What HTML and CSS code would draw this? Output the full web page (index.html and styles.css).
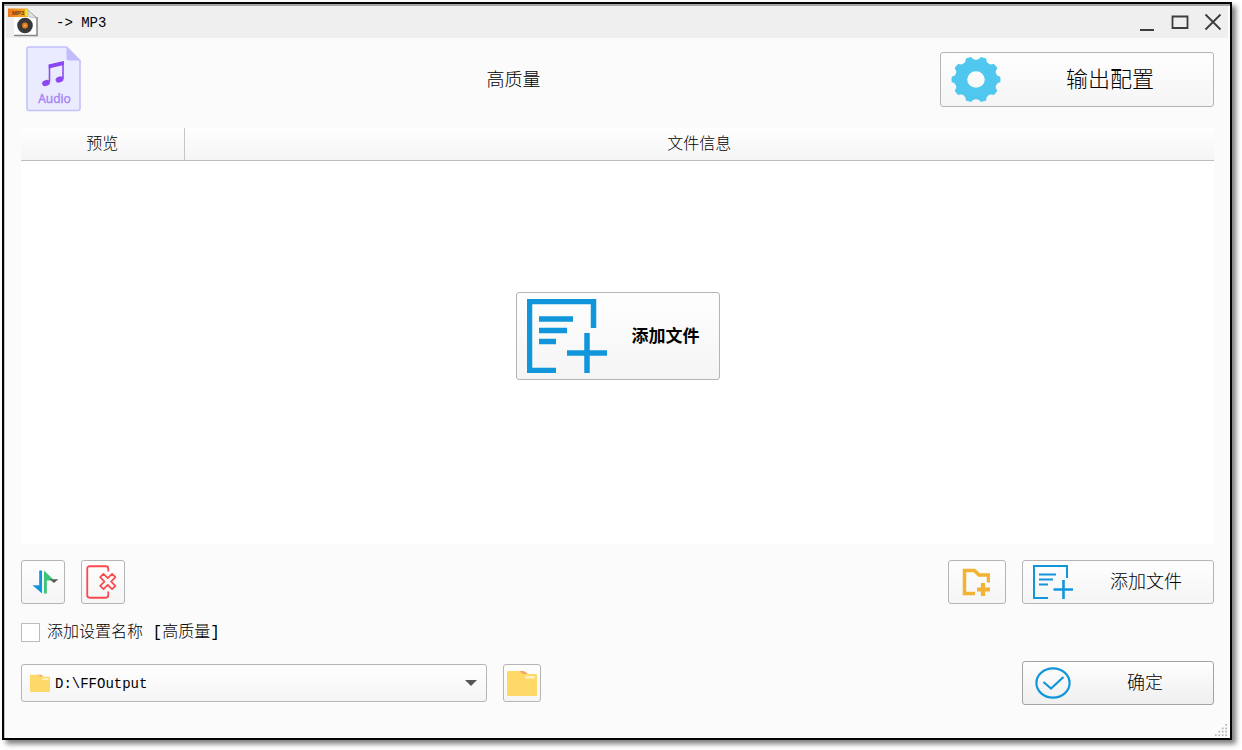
FILE: index.html
```html
<!DOCTYPE html>
<html lang="zh-CN">
<head>
<meta charset="utf-8">
<title>MP3</title>
<link rel="stylesheet" href="styles.css">
</head>
<body>
<div class="window">
  <header class="titlebar">
    <svg class="app-icon" viewBox="0 0 30 30" aria-hidden="true">
      <path d="M6 4h17l6 6v18H6z" fill="#fff"/>
      <path d="M29 10v18.500H6" fill="none" stroke="#858585" stroke-width="1.500"/>
      <path d="M20 3l9 8" fill="none" stroke="#999"/>
      <path d="M20 3l1 7 7 1z" fill="#e3e3e3" stroke="#aaa" stroke-width=".6"/>
      <circle cx="17" cy="18.500" r="7.800" fill="#383838"/>
      <circle cx="17" cy="18.500" r="2.900" fill="#e87d1c"/>
      <circle cx="17" cy="18.500" r=".7" fill="#ffd9a8"/>
      <path d="M0 1.500h20v8.500H0z" fill="url(#tag)"/>
      <path d="M18.500 2.500v6.500" stroke="#f5ee30" stroke-width="2"/>
      <defs><linearGradient id="tag"><stop stop-color="#ee761d"/><stop offset="1" stop-color="#f3b323"/></linearGradient></defs>
      <text x="4" y="8" class="tag-text">MP3</text>
    </svg>
    <h1 class="title">-&gt; MP3</h1>
    <div class="window-controls">
      <button class="control" aria-label="最小化"><svg viewBox="0 0 18 18"><path d="M2 17h14" stroke-width="2"/></svg></button>
      <button class="control" aria-label="最大化"><svg viewBox="0 0 18 18"><path d="M1.500 3.500h15v11.500h-15z" stroke-width="1.800"/></svg></button>
      <button class="control" aria-label="关闭"><svg viewBox="0 0 18 18"><path d="M1.500 1.500l15 15M16.500 1.500l-15 15" stroke-width="1.800"/></svg></button>
    </div>
  </header>

  <main class="content">
    <section class="profile">
      <svg class="audio-icon" viewBox="0 0 55 66" aria-hidden="true">
        <path d="M2.500 1h38L54 14.500v48a2 2 0 0 1-2 2H3a2 2 0 0 1-2-2V2.500A1.500 1.500 0 0 1 2.500 1z" fill="#ebebff" stroke="#c3c1fb" stroke-width="1.600"/>
        <path d="M40.500 1L54 14.500H42.500a2 2 0 0 1-2-2z" fill="#c0bdfc"/>
        <path d="M23.500 36V19.500L37 16.500V33" fill="none" stroke="#8f4df2" stroke-width="1.600"/>
        <path d="M22.700 18.600L37.800 15v4l-15.100 3.600z" fill="#8847f0"/>
        <ellipse cx="20" cy="37" rx="4" ry="3" fill="#8c49f2" transform="rotate(-18 20 37)"/>
        <ellipse cx="33.500" cy="33.500" rx="4" ry="3" fill="#8c49f2" transform="rotate(-18 33.500 33.500)"/>
        <text x="28.500" y="56.500" class="audio-text">Audio</text>
      </svg>
      <p class="profile-name">高质量</p>
      <button class="btn config-btn">
        <svg class="gear-icon" viewBox="0 0 50 50" preserveAspectRatio="none" aria-hidden="true">
          <mask id="teeth">
            <rect width="50" height="50" fill="#fff"/>
            <circle cx="25" cy="25" r="8.800"/>
            <circle cx="49.700" cy="33" r="5"/><circle cx="40.300" cy="46" r="5"/><circle cx="25" cy="51" r="5"/><circle cx="9.700" cy="46" r="5"/><circle cx=".3" cy="33" r="5"/>
            <circle cx="49.700" cy="17" r="5"/><circle cx="40.300" cy="4" r="5"/><circle cx="25" cy="-1" r="5"/><circle cx="9.700" cy="4" r="5"/><circle cx=".3" cy="17" r="5"/>
          </mask>
          <circle cx="25" cy="25" r="24.500" fill="#50c7ee" mask="url(#teeth)"/>
        </svg>
        <span class="btn-label">输出配置</span>
      </button>
    </section>

    <section class="files">
      <table class="file-table">
        <thead><tr><th class="col-preview">预览</th><th>文件信息</th></tr></thead>
        <tbody></tbody>
      </table>
      <button class="btn add-large">
        <svg class="add-large-icon" viewBox="0 0 80 74" aria-hidden="true"><use href="#add-bold"/></svg>
        <span class="btn-label">添加文件</span>
      </button>
    </section>

    <section class="toolbar">
      <button class="btn square" aria-label="排序">
        <svg viewBox="0 0 44 44" aria-hidden="true">
          <path d="M18 10h3v24L11 25.500h7z" fill="#1296db"/>
          <path d="M23 10l9 8.500v2h-6V34h-3z" fill="#3cc478"/>
          <path d="M29 19h9l-4.500 4z" fill="#595959"/>
        </svg>
      </button>
      <button class="btn square" aria-label="清空列表">
        <svg viewBox="0 0 44 44" fill="none" stroke="#fb4a4d" aria-hidden="true">
          <path d="M27.500 11V8a2.500 2.500 0 0 0-2.500-2.500H8A2.500 2.500 0 0 0 5.500 8v28A2.500 2.500 0 0 0 8 38.500h17a2.500 2.500 0 0 0 2.500-2.500v-4" stroke-width="1.900"/>
          <path d="M22.500 13.500l4.500 4.500L31.500 13.500l3.500 3.500-4.500 4.500 4.500 4.500-3.500 3.500-4.500-4.500-4.500 4.500-3.500-3.500 4.500-4.500-4.500-4.500z" stroke-width="1.800" stroke-linejoin="round"/>
        </svg>
      </button>
      <div class="spacer"></div>
      <button class="btn folder-btn" aria-label="添加文件夹">
        <svg class="add-folder-icon" viewBox="0 0 28 28" fill="none" stroke="#f2b233" stroke-width="3.500" aria-hidden="true">
          <path d="M13 25.500H2.500v-23h10L17 7h9.500v7.500"/>
          <path d="M21 15v13M15 21.500h13" stroke-width="4.200"/>
        </svg>
      </button>
      <button class="btn action-btn">
        <svg class="add-icon" viewBox="0 0 40 34" fill="none" stroke="#1296db" stroke-width="2" aria-hidden="true">
          <path d="M15 33H1V1h33v12M6 9.500h17M6 14.500h14M6 19.500h9"/>
          <path d="M20.500 24.500H40M30.500 15v19" stroke-width="2.600"/>
        </svg>
        <span class="btn-label">添加文件</span>
      </button>
    </section>

    <section class="options">
      <input class="check" type="checkbox" id="append-name">
      <label for="append-name">添加设置名称 [高质量]</label>
    </section>

    <section class="output">
      <div class="path">
        <svg class="path-folder" viewBox="0 0 30 26" preserveAspectRatio="none" aria-hidden="true"><use href="#folder"/></svg>
        <select class="path-select" aria-label="输出文件夹"><option>D:\FFOutput</option></select>
        <svg class="path-arrow" viewBox="0 0 12 6" aria-hidden="true"><path d="M0 0h12L6 6z" fill="#555"/></svg>
      </div>
      <button class="btn open-btn" aria-label="打开文件夹">
        <svg class="open-folder" viewBox="0 0 30 26" preserveAspectRatio="none" aria-hidden="true"><use href="#folder"/></svg>
      </button>
      <div class="spacer"></div>
      <button class="btn action-btn confirm-btn">
        <svg class="ok-icon" viewBox="0 0 36 32" fill="none" stroke="#1296db" stroke-width="2.200" aria-hidden="true">
          <ellipse cx="18" cy="16" rx="16.600" ry="14.700"/>
          <path d="M8.500 15l7.500 6.500L28.500 10"/>
        </svg>
        <span class="btn-label">确定</span>
      </button>
    </section>
  </main>
  <svg class="grip" viewBox="0 0 14 14" aria-hidden="true"><path d="M12 1h2M8 5h2M12 5h2M4 9h2M8 9h2M12 9h2M0 13h2M4 13h2M8 13h2M12 13h2" stroke="#b9b9b9" stroke-width="2"/></svg>
</div>

<svg class="symbols" aria-hidden="true">
  <symbol id="add-bold" viewBox="0 0 80 74">
    <path d="M29 71.500H2.500v-69h64V29M12 20h34M12 31.500h28M12 42.500h17" fill="none" stroke="#1296db" stroke-width="5.500"/>
    <path d="M40 54h40M60 34v40" fill="none" stroke="#1296db" stroke-width="5.500"/>
  </symbol>
  <symbol id="folder" viewBox="0 0 30 26" preserveAspectRatio="none">
    <path d="M11 1h6l4 3h-8z" fill="#f2a660"/>
    <path d="M1 1h11l4 3h13a1 1 0 0 1 1 1v20a1 1 0 0 1-1 1H1a1 1 0 0 1-1-1V2a1 1 0 0 1 1-1z" fill="#ffd968"/>
    <rect x="18" y="6" width="10" height="2.500" rx="1" fill="#fff1bf"/>
  </symbol>
</svg>
</body>
</html>
```
FILE: styles.css
```css
* {
  box-sizing: border-box;
}

body {
  margin: 0;
  min-height: 100vh;
  display: flex;
  background: #fff;
  color: #000;
  font: 300 16px/20px "Liberation Mono", "Noto Sans CJK SC", monospace;
}

svg {
  display: block;
  flex: none;
}

.symbols {
  position: absolute;
  width: 0;
  height: 0;
}

.window {
  position: relative;
  flex: 1;
  display: flex;
  flex-direction: column;
  margin: 2px 10px 10px 2px;
  padding: 2px;
  border: 2px solid #050505;
  background: #fbfbfb;
  box-shadow: inset 0 2px #a5a5a5, inset 1px 0 #c4c4c4, 4px 4px 5px rgba(0, 0, 0, .5);
}

.titlebar {
  display: flex;
  align-items: center;
  height: 32px;
  background: #efefef;
}

.app-icon {
  width: 30px;
  height: 30px;
  margin-left: 2px;
}

.tag-text {
  font: 700 6px "Liberation Sans", sans-serif;
  fill: #7d3212;
}

.title {
  flex: 1;
  margin: 0 0 0 18px;
  padding-top: 2px;
  font-size: 14px;
  font-weight: 400;
}

.window-controls {
  display: flex;
  gap: 15px;
  margin-right: 6px;
}

.control {
  width: 18px;
  height: 18px;
  padding: 0;
  border: 0;
  background: none;
}

.control svg {
  width: 18px;
  height: 18px;
  fill: none;
  stroke: #3d3d3d;
}

.content {
  flex: 1;
  display: flex;
  flex-direction: column;
  padding: 0 14px 31px 15px;
}

.profile {
  display: flex;
  align-items: center;
  height: 90px;
  padding: 0 0 8px 5px;
}

.audio-icon {
  width: 55px;
  height: 66px;
}

.audio-text {
  font: 400 12px "Open Sans", sans-serif;
  text-anchor: middle;
  fill: #a583f2;
  stroke: #a583f2;
  stroke-width: .4px;
}

.profile-name {
  flex: 1;
  margin: 0 0 0 6px;
  padding-top: 4px;
  font-size: 18px;
  text-align: center;
}

.btn {
  display: flex;
  align-items: center;
  gap: 16px;
  padding: 0 10px;
  border: 1px solid #b5b5b5;
  border-radius: 3px;
  background: linear-gradient(#fefefe, #f5f5f5);
  color: #000;
  font-family: inherit;
  font-weight: 300;
}

.btn-label {
  flex: 1;
  padding-bottom: 4px;
  text-align: center;
}

.config-btn {
  width: 274px;
  height: 55px;
  font-size: 22px;
}

.gear-icon {
  width: 50px;
  height: 47px;
}

.files {
  flex: 1;
  display: grid;
  background: #fff;
}

.file-table {
  grid-area: 1 / 1;
  align-self: start;
  width: 100%;
  border-collapse: collapse;
  table-layout: fixed;
}

.file-table th {
  height: 32px;
  padding: 3px 0 0;
  border-bottom: 1px solid #bdbdbd;
  background: linear-gradient(#fefefe, #f5f5f5);
  font-weight: 300;
}

.file-table .col-preview {
  width: 163px;
  border-right: 1px solid #c6c6c6;
}

.add-large {
  grid-area: 1 / 1;
  place-self: center;
  width: 204px;
  height: 88px;
  font-size: 17px;
  font-weight: 700;
}

.add-large-icon {
  width: 80px;
  height: 74px;
}

.toolbar {
  display: flex;
  gap: 16px;
  padding-top: 16px;
}

.square {
  width: 44px;
  height: 44px;
  padding: 0;
}

.square svg {
  width: 42px;
  height: 42px;
}

.spacer {
  flex: 1;
}

.folder-btn {
  justify-content: center;
  width: 58px;
  height: 44px;
  padding: 0 12px 0 10px;
}

.add-folder-icon {
  width: 28px;
  height: 28px;
}

.action-btn {
  width: 192px;
  height: 44px;
  font-size: 18px;
}

.add-icon {
  width: 40px;
  height: 34px;
}

.options {
  display: flex;
  align-items: center;
  gap: 7px;
  height: 57px;
}

.check {
  appearance: none;
  width: 19px;
  height: 19px;
  margin: 0;
  border: 1px solid #bcbcbc;
  background: #fff;
}

.output {
  display: flex;
  align-items: center;
  gap: 16px;
}

.path {
  position: relative;
  flex: 0 1 466px;
}

.path-select {
  display: block;
  appearance: none;
  width: 100%;
  height: 38px;
  padding: 2px 33px 0;
  border: 1px solid #b5b5b5;
  border-radius: 3px;
  background: linear-gradient(#fefefe, #f5f5f5);
  color: #000;
  font-family: inherit;
  font-size: 14px;
}

.path-folder {
  position: absolute;
  left: 9px;
  top: 10px;
  width: 20px;
  height: 18px;
}

.path-arrow {
  position: absolute;
  right: 10px;
  top: 16px;
  width: 12px;
  height: 6px;
}

.open-btn {
  justify-content: center;
  width: 38px;
  height: 38px;
  padding: 0;
}

.open-folder {
  width: 30px;
  height: 26px;
}

.confirm-btn {
  padding-left: 12px;
  border-color: #a3a3a3;
  background: linear-gradient(#fefefe, #efefef);
}

.ok-icon {
  width: 36px;
  height: 32px;
}

.grip {
  position: absolute;
  right: 3px;
  bottom: 2px;
  width: 12px;
  height: 12px;
}
```
